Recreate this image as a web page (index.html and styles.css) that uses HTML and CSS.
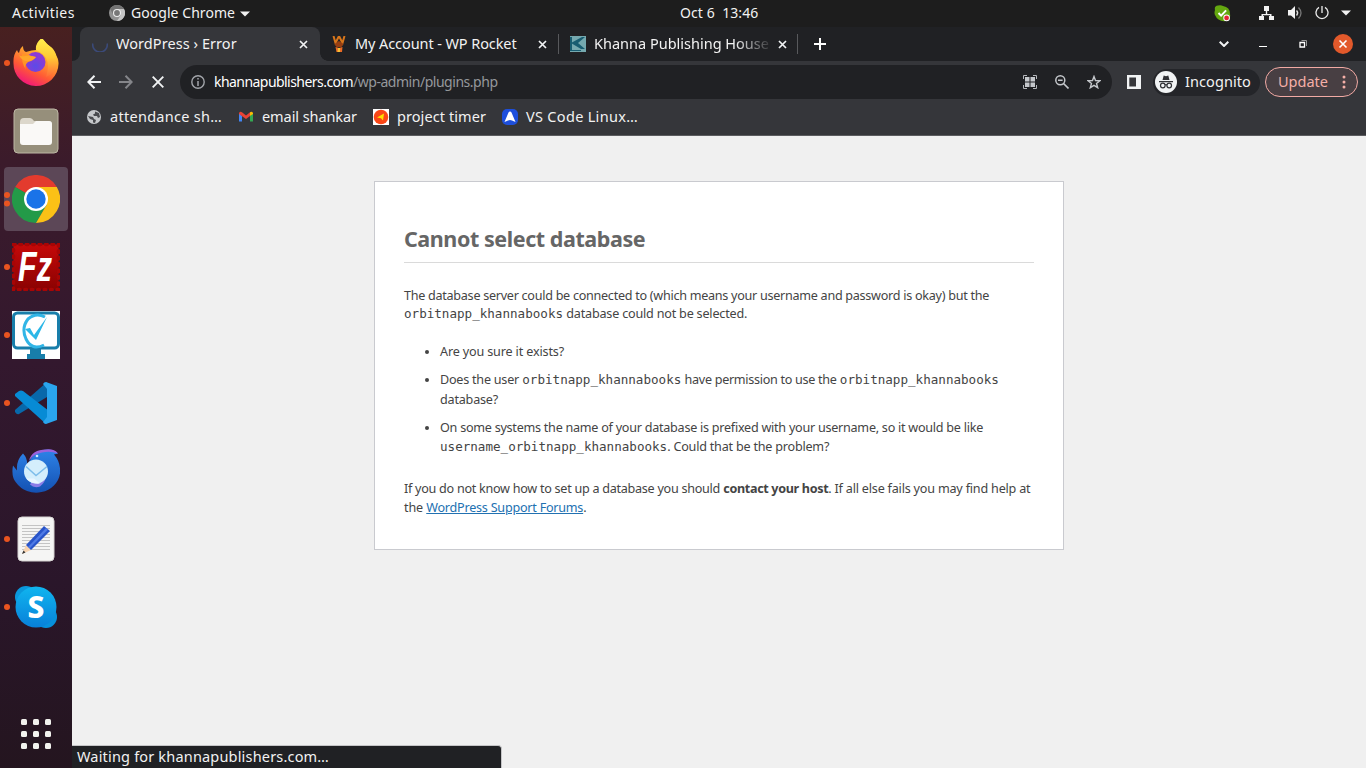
FILE: index.html
```html
<!DOCTYPE html>
<html lang="en">
<head>
<meta charset="utf-8">
<title>WordPress › Error</title>
<link rel="stylesheet" href="styles.css">
</head>
<body>
<header class="topbar">
  <span class="t activities">Activities</span>
  <svg class="app-icon" width="16" height="16" viewBox="0 0 16 16"><circle cx="8" cy="8" r="8" fill="#929292"/><path d="M8 4h7A8 8 0 0 1 8 16l4-6z" fill="#c4c4c4"/><path d="M8 4h7A8 8 0 0 0 1.2 4l3.2 6z" fill="#747474"/><circle cx="8" cy="8" r="4" fill="#eee"/><circle cx="8" cy="8" r="2.9" fill="#777"/></svg>
  <span class="t app-name">Google Chrome</span>
  <svg class="app-caret" width="10" height="6"><path d="M0 .5h10L5 5.5z" fill="#f2f2f2"/></svg>
  <span class="t clock">Oct 6 &nbsp;13:46</span>
  <div class="tray">
    <svg width="17" height="17" viewBox="0 0 17 17"><path d="M1 5Q0 1 4 .5Q7-.2 9 1Q16 2 16 9Q17 15 12 16Q4 17 1 10Q0 8 1 5z" fill="#64a70f"/><path d="M4.500 8l2.600 2.600 5-5.200" fill="none" stroke="#fff" stroke-width="2"/><circle cx="12.600" cy="12.900" r="3.300" fill="#fff"/><circle cx="12.600" cy="12.900" r="2.400" fill="#e32636"/></svg>
    <svg class="net" width="16" height="14" viewBox="0 0 16 14"><path d="M5 0h5v5H8.200v3h4.300v2H15v4h-5v-4h1V9.300H4V10h1v4H0v-4h2.500V8h4.300V5H5z" fill="#f2f2f2"/></svg>
    <svg class="vol" width="15" height="14" viewBox="0 0 15 14"><path d="M0 4h3l4-4v13L3 9.500H0z" fill="#f2f2f2"/><path d="M8.500 4.500q2.200 2.200 0 5" stroke="#ddd" stroke-width="1.500" fill="none"/><path d="M10.500 1.500q5 5.500 0 11" stroke="#777" stroke-width="1.300" fill="none"/></svg>
    <svg class="power" width="14" height="14" viewBox="0 0 14 14"><path d="M4 1.400a6 6 0 1 0 6 0M7 0v7" stroke="#ededed" stroke-width="1.300" fill="none"/></svg>
    <svg class="sys-caret" width="10" height="6"><path d="M0 .5h10L5 5.500z" fill="#f2f2f2"/></svg>
  </div>
</header>
<div class="desktop">
<nav class="dock">
  <div class="tile run"><svg width="48" height="48" viewBox="0 1 48 48"><defs><linearGradient id="ff" x1=".8" y1="0" x2=".3" y2="1"><stop offset="0" stop-color="#fff04a"/><stop offset=".35" stop-color="#ffb02e"/><stop offset=".7" stop-color="#ff5a35"/><stop offset="1" stop-color="#f0137e"/></linearGradient><linearGradient id="fy" x1=".5" y1="0" x2=".5" y2="1"><stop offset="0" stop-color="#fff14d"/><stop offset=".5" stop-color="#ffc935"/><stop offset="1" stop-color="#ff6a38"/></linearGradient><radialGradient id="fp" cx=".5" cy=".7"><stop offset="0" stop-color="#5b4be8"/><stop offset="1" stop-color="#8a3bd6"/></radialGradient></defs><path d="M28 8Q26 3 30 0Q34 6 40 10Q43 13 42 15Q47 20 46.500 26A22.500 22.500 0 0 1 1.500 25Q1 17 5 12Q6 15 7 15Q8 10 11 8Q11 13 14 14Q20 12 24 12z" fill="url(#ff)"/><path d="M30 0Q34 6 40 10Q46 16 45 26Q43 36 34 39Q38 27 34 20Q31 15 24 12Q23 5 30 0z" fill="url(#fy)"/><circle cx="23.500" cy="24" r="10" fill="url(#fp)"/><path d="M10 16Q17 16 19 18Q22 19 24 19Q21 23 16 24Q12 27 14 32Q9 24 10 16z" fill="#ff9525"/><path d="M7 17Q9 19 13 18Q18 17 24 19Q20 24 14 23Q9 22 7 17z" fill="#ffa72a"/></svg></div>
  <div class="tile"><svg width="48" height="48" viewBox="0 0 48 48"><rect x="2" y="2" width="44" height="44" rx="4" fill="#968f7b" stroke="#bdb7a5"/><path d="M8 15q0-4 4-4h6q2 0 4 3h14q4 0 4 4v5H8z" fill="#dcd7cb"/><path d="M8 17h13l3-3h13q3 0 3 3v18q0 3-3 3H11q-3 0-3-3z" fill="#faf9f7"/></svg></div>
  <div class="tile run2 active"><svg width="48" height="48" viewBox="0 0 48 48"><path d="M24 24L3.200 12A24 24 0 0 1 44.800 12z" fill="#e33b2e"/><path d="M24 24L3.200 12A24 24 0 0 0 24 48L34.500 30z" fill="#239a48"/><path d="M24 12H44.800A24 24 0 0 1 24 48L34.500 30z" fill="#fbc116"/><circle cx="24" cy="24" r="12" fill="#fff"/><circle cx="24" cy="24" r="9.700" fill="#1a73e8"/></svg></div>
  <div class="tile run"><svg width="48" height="48" viewBox="0 0 48 48"><defs><linearGradient id="fz" x2="0" y2="1"><stop stop-color="#c50909"/><stop offset="1" stop-color="#8b0202"/></linearGradient></defs><path d="M1.500 1.500h45v45h-45z" fill="url(#fz)"/><path d="M1.500 1.500h45v45h-45z" fill="none" stroke="#a80505" stroke-width="3.600" stroke-linecap="round" stroke-dasharray="1.500 4.925"/><text class="fz" x="6" y="38" textLength="34" lengthAdjust="spacingAndGlyphs">Fz</text></svg></div>
  <div class="tile run"><svg width="48" height="48" viewBox="0 0 48 48"><path fill="#fff" d="M0 0h48v48H0z"/><rect x="1.500" y="2" width="45" height="35" rx="4" fill="none" stroke="#187eaa" stroke-width="3"/><path d="M18 37h11v6h4v5H15v-5h3z" fill="#187eaa"/><path d="M33 6Q24 1 16 8Q9 17 14 28Q20 40 32 34" fill="none" stroke="#31b5e6" stroke-width="3"/><path d="M13 18l5-1 4 7L35 6l-11 23z" fill="#2bb7e7"/></svg></div>
  <div class="tile run"><svg width="48" height="48" viewBox="0 0 48 48"><path d="M3 31L35 3v15L7 35q-2 1-4-2z" fill="#0868aa"/><path d="M3 15l4-3q2-1 4 0l26 20-3 13L3 17z" fill="#078bd5"/><path d="M34 3l11 4v34l-11 4q-2 0-3-2l4-5V10l-4-5q1-2 3-2z" fill="#2aa5ee"/></svg></div>
  <div class="tile"><svg width="48" height="48" viewBox="0 -1.500 48 48"><defs><linearGradient id="tb" x2="0" y2="1"><stop stop-color="#2e83e8"/><stop offset="1" stop-color="#1451b2"/></linearGradient></defs><path d="M11 5q5 5 4 13Q19 6 29 2Q39-1 46 5l-4 1Q49 14 48 25A24 22 0 0 1 4 34Q-1 28 1 17l4 5Q4 12 11 5z" fill="url(#tb)"/><path d="M17 12Q20 1 34 1Q42 0 46 5Q38 2 30 4Q22 5 17 12z" fill="#9b62dc"/><path d="M32 15q6 15-4 23q-6 2-10-2z" fill="#8b7ce7"/><circle cx="24" cy="23" r="12" fill="#d4eefc"/><path d="M14 18l10 9 11-9" fill="none" stroke="#7dbdea" stroke-width="1.500"/><circle cx="25" cy="7.500" r="1.300" fill="#cdeaff"/><path d="M14 30q6 6 14 5l-6-5z" fill="#e9f6ff"/></svg></div>
  <div class="tile run"><svg width="48" height="48" viewBox="0 0 48 48"><rect x="6" y="2" width="36" height="44" rx="4" fill="#f5f5f4" stroke="#d6d3d2"/><path d="M10 10.500h28M10 13.500h28M10 16.500h28M10 19.500h28M10 22.500h28M10 25.500h28M10 28.500h28M10 31.500h28M10 34.500h28" stroke="#c4c4c4"/><path d="M10 39l4-9 5 5z" fill="#f8d4b1"/><path d="M10 39l1.500-3.500 2 2z" fill="#333"/><path d="M14 30L32 11l6 5L19 35z" fill="#2854c9"/><path d="M16 32L34 13l2 1.500L18 33z" fill="#4f7ae5"/></svg></div>
  <div class="tile run"><svg width="48" height="48" viewBox="0 0 48 48"><defs><linearGradient id="sk" x2="0" y2="1"><stop stop-color="#10b5ef"/><stop offset="1" stop-color="#0880d9"/></linearGradient></defs><circle cx="14" cy="14" r="11" fill="#0a98dc"/><circle cx="34" cy="34" r="11" fill="#0790db"/><circle cx="24" cy="24" r="20.500" fill="url(#sk)"/><text class="sk-s" x="24" y="34.500">S</text></svg></div>
  <div class="grid"><i></i><i></i><i></i><i></i><i></i><i></i><i></i><i></i><i></i></div>
</nav>
<main class="window">
  <div class="tabs">
    <div class="tab current"><svg class="fav" width="16" height="16"><path d="M.8 6.500A7.300 7.300 0 1 0 15.200 6.500" transform="translate(0 1)" fill="none" stroke="#3b4a78" stroke-width="1.600"/></svg><span class="t title">WordPress › Error</span><svg class="x" width="9" height="9"><path d="M1 1l7 7M8 1l-7 7" stroke="#f1f3f4" stroke-width="1.700"/></svg></div>
    <div class="tab second"><svg class="fav" width="16" height="16"><path d="M2.500 0l2 7L8 0l3.500 7 2-7" fill="none" stroke="#d8761b" stroke-width="2"/><path d="M3.500 8L8 5l4.500 3-2 3h-5z" fill="#973f12"/><path d="M4.500 11l3.500 1 3.500-1-.5 5H5.500z" fill="#e96b24"/><path d="M7 12h2v4H6.500z" fill="#f8bd35"/></svg><span class="t account">My Account - WP Rocket</span><svg class="x" width="9" height="9"><path d="M1 1l7 7M8 1l-7 7" stroke="#f1f3f4" stroke-width="1.700"/></svg></div>
    <div class="tab third"><svg class="fav" width="16" height="16"><path fill="#75a9af" d="M0 0h16v16H0z"/><path fill="#185d71" d="M0 1h2v14H0zM1 7L12 1h3L8 7l7 6h-4zM2 14h9v1H2z"/></svg><span class="t fade">Khanna Publishing House</span><svg class="x" width="9" height="9"><path d="M1 1l7 7M8 1l-7 7" stroke="#f1f3f4" stroke-width="1.700"/></svg></div>
    <svg class="plus" width="12" height="12"><path d="M6 0v12M0 6h12" stroke="#fff" stroke-width="2"/></svg>
    <div class="controls">
      <svg width="10" height="6"><path d="M.7.7L5 5 9.300.7" fill="none" stroke="#f1f3f4" stroke-width="2"/></svg>
      <svg class="min" width="8" height="6"><path d="M0 5.500h8" stroke="#fff"/></svg>
      <svg class="max" width="8" height="8"><path d="M1 2.500h4.500V7H1z" fill="none" stroke="#fff" stroke-width="1.300"/><path d="M2.500.5h5V6" fill="none" stroke="#999"/></svg>
      <svg class="close" width="20" height="20"><circle cx="10" cy="10" r="10" fill="#e2592b"/><path d="M6.500 6.500l7 7M13.500 6.500l-7 7" stroke="#fff" stroke-width="1.600"/></svg>
    </div>
  </div>
  <div class="toolbar">
    <svg width="14" height="14"><path d="M14 7H1.500M7.500.8L1.300 7l6.200 6.200" fill="none" stroke="#f1f3f4" stroke-width="2"/></svg>
    <svg class="fwd" width="14" height="14"><path d="M0 7h12.500M6.500.8L12.700 7l-6.200 6.200" fill="none" stroke="#85868a" stroke-width="2"/></svg>
    <svg class="stop" width="12" height="12"><path d="M.7.7l10.600 10.600M11.300.7L.7 11.300" stroke="#f1f3f4" stroke-width="1.900"/></svg>
    <div class="omnibox">
      <svg width="14" height="14"><circle cx="7" cy="7" r="6.200" fill="none" stroke="#a2a5aa" stroke-width="1.400"/><path d="M7 6v5M7 3v1.600" stroke="#a2a5aa" stroke-width="1.500"/></svg>
      <span class="t host">khannapublishers.com</span><span class="t path">/wp-admin/plugins.php</span>
      <svg class="qr" width="14" height="14"><path d="M.5 4V.5H4M10 .5h3.500V4M.5 10v3.500H4M10 13.500h3.500V10" fill="none" stroke="#b4b7bb"/><path d="M2 2h4.500v4.500H2zM7.500 2H12v4.500H7.500zM2 7.500h4.500V12H2zM7.500 7.500H12V12H7.500z" fill="#c4c7cb"/></svg>
      <svg class="mag" width="14" height="14"><circle cx="5.300" cy="5.300" r="4.500" fill="none" stroke="#c4c7cb" stroke-width="1.500"/><path d="M8.500 8.500l5 5M3 5.300h4.600" stroke="#c4c7cb" stroke-width="1.600"/></svg>
      <svg class="star" width="14" height="14"><path d="M7 1.500l1.500 4 4.400.2-3.400 2.700 1.200 4.300L7 10.300l-3.700 2.400 1.200-4.300L1.100 5.700l4.400-.2z" fill="none" stroke="#c4c7cb" stroke-width="1.400"/></svg>
    </div>
    <svg class="panel" width="14" height="14"><path d="M0 0h14v14H0zM2.300 2.500v9H9v-9z" fill="#f1f3f4" fill-rule="evenodd"/></svg>
    <div class="incog"><svg width="22" height="22"><circle cx="11" cy="11" r="11" fill="#f1f3f4"/><path d="M7.500 9L8.700 4.500l2.300.7 2.300-.7L14.500 9zM4 10h14v1.300H4z" fill="#303135"/><g fill="none" stroke="#303135" stroke-width="1.200"><circle cx="7.800" cy="14.500" r="2.300"/><circle cx="14.200" cy="14.500" r="2.300"/><path d="M10 14q1-.8 2 0"/></g></svg><span class="t">Incognito</span></div>
    <div class="update"><span class="t">Update</span><svg width="4" height="14"><g fill="#f5afa8"><circle cx="2" cy="2" r="1.500"/><circle cx="2" cy="7" r="1.500"/><circle cx="2" cy="12" r="1.500"/></g></svg></div>
  </div>
  <div class="bookmarks">
    <div class="bm b1"><svg width="14" height="14"><circle cx="7" cy="7" r="7" fill="#c6c8cb"/><path d="M8 1.500l4 1.500 1 4-2 1-1-2H7L6 4.500l2-1zM1 6l5 1 1 2 2 1-1 3-2-.5V10L3 9z" fill="#4a4b4f"/></svg><span class="t">attendance sh…</span></div>
    <div class="bm b2"><svg width="14" height="12"><path d="M0 2v8.500h3V5z" fill="#4285f4"/><path d="M11 5v5.500h3V2z" fill="#34a853"/><path d="M0 2q1-2 3-.8l4 3.300 4-3.300V5L7 8 0 3z" fill="#ea4335"/><path d="M11 1.200Q13 0 14 2v1l-3 2z" fill="#fbbc04"/></svg><span class="t">email shankar</span></div>
    <div class="bm b3"><svg width="16" height="16"><path fill="#fff" d="M0 0h16v16H0z"/><circle cx="8" cy="8" r="7.300" fill="#fa4616"/><path d="M4 8.500l7-4-1 7-2-2.200z" fill="#ffe000"/></svg><span class="t">project timer</span></div>
    <div class="bm b4"><svg width="16" height="16"><rect width="16" height="16" rx="5" fill="#1e4fdb"/><path d="M8 2.500q1 0 1.500 1L13.500 13l-3.500-1.500Q8 10.500 6 11.500L2.500 13l4-9.500q.5-1 1.500-1z" fill="#fff"/></svg><span class="t">VS Code Linux…</span></div>
  </div>
  <div class="page">
    <article class="card">
      <h1>Cannot select database</h1>
      <p class="intro"><span class="t s28">The database server could be connected to (which means your username and password is okay) but the</span><br><code>orbitnapp_khannabooks</code> <span class="t s20">database could not be selected.</span></p>
      <ul>
        <li><span class="t s16">Are you sure it exists?</span></li>
        <li><span class="t s24">Does the user</span> <code>orbitnapp_khannabooks</code> <span class="t s30">have permission to use the</span> <code>orbitnapp_khannabooks</code><br><span class="t s20">database?</span></li>
        <li><span class="t s26">On some systems the name of your database is prefixed with your username, so it would be like</span><br><code>username_orbitnapp_khannabooks</code><span class="t s21">. Could that be the problem?</span></li>
      </ul>
      <p class="help"><span class="t s27">If you do not know how to set up a database you should</span> <b class="t s34">contact your host</b><span class="t s20">. If all else fails you may find help at</span><br><span class="t s16">the</span> <a class="t s24">WordPress Support Forums</a>.</p>
    </article>
    <div class="status"><span class="t">Waiting for khannapublishers.com…</span></div>
  </div>
</main>
</div>
</body>
</html>
```
FILE: styles.css
```css
* { box-sizing: border-box; }
body { margin: 0; width: 1366px; height: 768px; overflow: hidden; font-family: "Noto Sans", "Open Sans", sans-serif; font-size: 14.500px; color: #f2f2f2; }
svg { display: block; flex: none; }
.t { white-space: nowrap; }

/* desktop top bar */
.topbar { display: flex; align-items: center; height: 27px; background: #1d1d1d; padding: 0 15px 0 12px; font-size: 14px; line-height: 25px; }
.topbar .t { padding-bottom: 2px; }
.activities { width: 63px; letter-spacing: 0.450px; }
.app-icon { margin-left: 34px; margin-bottom: 1px; }
.app-name { margin-left: 6px; width: 104px; letter-spacing: 0.050px; }
.app-caret { margin-left: 5px; }
.clock { margin-left: 430px; width: 78px; letter-spacing: 0.080px; }
.tray { display: flex; align-items: center; margin-left: auto; padding-bottom: 1px; }
.net { margin-left: 28px; }
.vol { margin-left: 13px; }
.power { margin-left: 12px; }
.sys-caret { margin-left: 12px; }

/* dock */
.desktop { display: flex; height: 741px; }
.dock { width: 72px; flex: none; display: flex; flex-direction: column; align-items: center; gap: 4px; padding: 4px 0 19px; background: linear-gradient(#482020 0, #3b1b2b 18%, #33182e 45%, #2a162a 75%, #24151f 100%); }
.tile { width: 64px; height: 64px; border-radius: 4px; display: flex; align-items: center; justify-content: center; position: relative; }
.active { background: #5c4757; }
.run::before, .run2::before { content: ""; position: absolute; left: 0; top: 29px; width: 6px; height: 6px; border-radius: 3px; background: #e95420; }
.run2::before { top: 25px; box-shadow: 0 8.500px #e95420; }
.fz { font-family: "Liberation Sans", sans-serif; font-weight: bold; font-style: italic; font-size: 42px; fill: #fff; }
.sk-s { font-family: "Noto Sans", sans-serif; font-weight: 800; font-size: 30px; text-anchor: middle; fill: #fff; }
.grid { margin-top: auto; display: grid; grid-template-columns: repeat(3, 6px); gap: 6px; }
.grid i { height: 6px; border-radius: 1.500px; background: #f2f2ee; }

/* browser tabs */
.window { flex: 1; display: flex; flex-direction: column; min-width: 0; }
.tabs { height: 34px; flex: none; display: flex; align-items: center; background: linear-gradient(#35363a, #35363a) 0 100% / 16px 8px no-repeat #202124; padding-left: 8px; position: relative; }
.tabs::before { content: ""; position: absolute; left: 0; bottom: 0; width: 8px; height: 8px; background: #202124; border-radius: 0 0 8px 0; }
.tab { height: 34px; width: 239px; display: flex; align-items: center; padding-left: 11px; }
.tab .t { margin-left: 8px; flex: 1; min-width: 0; overflow: hidden; padding-bottom: 2px; }
.tab .title { letter-spacing: 0.060px; }
.tab .account { letter-spacing: -0.090px; }
.tab .x { margin-right: 11px; margin-left: 8px; }
.tab.current { width: 240px; padding-left: 12px; background: #35363a; border-radius: 8px 8px 0 0; position: relative; }
.tab.current::after { content: ""; position: absolute; left: 240px; bottom: 0; width: 8px; height: 8px; background: radial-gradient(circle at 100% 0, transparent 7.500px, #35363a 8px); }
.tab.current .x { margin-right: 12px; }
.second { width: 238px; }
.third { width: 240px; padding-left: 12px; background: linear-gradient(#58595c, #58595c) 0 7px / 1px 20px no-repeat, linear-gradient(#58595c, #58595c) 100% 7px / 1px 20px no-repeat; }
.fade { -webkit-mask-image: linear-gradient(90deg, #000 80%, transparent 102%); mask-image: linear-gradient(90deg, #000 80%, transparent 102%); }
.plus { margin-left: 16px; }
.controls { margin-left: auto; display: flex; align-items: center; padding-right: 13px; }
.min { margin-left: 30px; }
.max { margin-left: 32px; }
.close { margin-left: 26px; }

/* navigation bar */
.toolbar { height: 42px; flex: none; background: #35363a; display: flex; align-items: center; padding-left: 15px; }
.toolbar .t { padding-bottom: 2px; }
.fwd { margin-left: 18px; }
.stop { margin-left: 19px; }
.omnibox { margin-left: 16px; width: 932px; height: 34px; border-radius: 17px; background: #202124; display: flex; align-items: center; padding: 0 11px; font-size: 14px; }
.host { margin-left: 9px; width: 139px; color: #fff; letter-spacing: -0.550px; }
.path { color: #95989c; letter-spacing: -0.470px; }
.qr { margin-left: auto; }
.mag { margin-left: 18px; }
.star { margin-left: 18px; }
.panel { margin-left: 15px; }
.incog { margin-left: 12px; height: 27px; width: 107px; border-radius: 14px; background: #242529; display: flex; align-items: center; padding-left: 2px; }
.incog .t { margin-left: 8px; letter-spacing: 0.080px; }
.update { margin-left: 5px; height: 30px; width: 93px; border: 1px solid #f2aaa4; border-radius: 15px; background: #483f43; color: #f5afa8; display: flex; align-items: center; padding: 0 11px 0 12px; justify-content: space-between; }

/* bookmarks bar */
.bookmarks { height: 33px; flex: none; background: #35363a; border-bottom: 1px solid #5b5c5f; display: flex; align-items: center; padding: 0 0 5px 15px; }
.bm { display: flex; align-items: center; }
.bm .t { margin-left: 8px; padding-bottom: 2px; }
.b1 { width: 152px; }
.b2 { width: 134px; }
.b3 { width: 129px; }
.b1 .t { margin-left: 9px; letter-spacing: 0.280px; }
.b2 .t { margin-left: 9px; letter-spacing: -0.077px; }
.b3 .t { letter-spacing: 0.078px; }
.b4 .t { letter-spacing: 0.310px; }

/* error page */
.page { flex: 1; background: #f0f0f0; position: relative; padding-top: 45px; }
.card { width: 690px; height: 369px; margin: 0 auto; border: 1px solid #c9cacf; background: #fff; padding: 41px 29px 0; color: #444; font-size: 12.600px; }
.card h1 { margin: 0; height: 40px; border-bottom: 1px solid #dadada; color: #666; font-size: 21.500px; line-height: 31px; letter-spacing: -0.430px; }
.card p { margin: 0; line-height: 19px; }
.card .intro { margin-top: 24px; line-height: 18px; }
.card ul { margin: 19px 0 0; padding-left: 36px; line-height: 19.500px; }
.card li { margin-bottom: 8.500px; }
.card .help { margin-top: 22.500px; }
code { font-family: "DejaVu Sans Mono", monospace; font-size: 12.580px; line-height: 1; }
.s16 { letter-spacing: -0.155px; }
.s20 { letter-spacing: -0.200px; }
.s21 { letter-spacing: -0.214px; }
.s24 { letter-spacing: -0.235px; }
.s26 { letter-spacing: -0.256px; }
.s27 { letter-spacing: -0.272px; }
.s28 { letter-spacing: -0.277px; }
.s30 { letter-spacing: -0.299px; }
.s34 { letter-spacing: -0.342px; }
.card a { color: #2271b1; text-decoration: underline; }
.status { position: absolute; left: 0; bottom: 0; width: 430px; height: 23px; background: #202124; border: 1px solid #c5c5c7; border-width: 1px 1px 0 0; border-radius: 0 4px 0 0; padding-left: 5px; line-height: 20px; letter-spacing: 0.180px; }
```
